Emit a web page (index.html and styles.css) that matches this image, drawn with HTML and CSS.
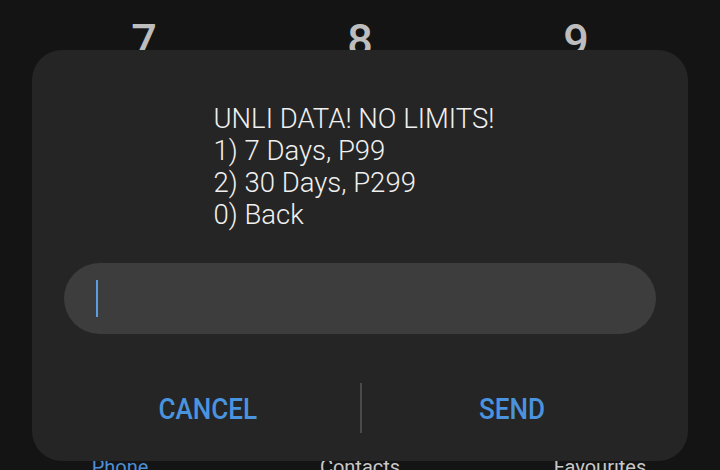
FILE: index.html
```html
<!DOCTYPE html>
<html lang="en">
<head>
  <meta charset="UTF-8">
  <title>USSD</title>
  <link rel="stylesheet" href="styles.css">
</head>
<body>
  <div class="screen">
    <div class="keypad">
      <span class="key">7</span>
      <span class="key">8</span>
      <span class="key">9</span>
    </div>

    <div class="tabs">
      <span class="tab active">Phone</span>
      <span class="tab">Contacts</span>
      <span class="tab">Favourites</span>
    </div>

    <div class="dialog">
      <div class="message">
        <div class="message-text">
          UNLI DATA! NO LIMITS!<br>
          1) 7 Days, P99<br>
          2) 30 Days, P299<br>
          0) Back
        </div>
      </div>

      <div class="reply">
        <span class="caret"></span>
      </div>

      <div class="actions">
        <button class="action cancel"><span>CANCEL</span></button>
        <span class="divider"></span>
        <button class="action send"><span>SEND</span></button>
      </div>
    </div>
  </div>
</body>
</html>
```

FILE: styles.css
```css
body {
  margin: 0;
  background: #141414;
  font-family: Roboto, 'Noto Sans', sans-serif;
}
.screen {
  position: relative;
  width: 720px;
  height: 470px;
  overflow: hidden;
}
.keypad {
  display: grid;
  grid-template-columns: repeat(3, 1fr);
  padding: 19px 36px 0;
}
.key {
  text-align: center;
  font-size: 45px;
  line-height: 44px;
  font-weight: 500;
  color: #bdbdbd;
}
.tabs {
  display: grid;
  grid-template-columns: repeat(3, 1fr);
  margin-top: 392px;
}
.tab {
  text-align: center;
  font-size: 20px;
  line-height: 24px;
  color: #c8c8c8;
}
.tab.active {
  color: #4c8fd6;
}

/* dialog sits over the dialer */
.dialog {
  position: absolute;
  left: 32px;
  top: 50px;
  width: 656px;
  height: 411px;
  background: #252525;
  border-radius: 30px;
  box-sizing: border-box;
  padding: 53px 32px 0;
}
.message {
  display: flex;
  justify-content: center;
}
.message-text {
  font-size: 27.5px;
  line-height: 32px;
  font-weight: 300;
  color: #f0f0f0;
  margin-left: -12px;
}
.reply {
  margin-top: 32px;
  height: 71px;
  border-radius: 36px;
  background: #3d3d3d;
  display: flex;
  align-items: center;
  padding-left: 32px;
}
.caret {
  width: 2px;
  height: 37px;
  background: #5c9ce0;
}
.actions {
  margin-top: 49px;
  height: 50px;
  display: flex;
  align-items: center;
}
.action {
  flex: 1;
  background: none;
  border: none;
  font-family: Roboto, 'Noto Sans', sans-serif;
  font-size: 30px;
  font-weight: 500;
  color: #4a93de;
  padding: 0;
}
.action span {
  display: inline-block;
  transform: scaleX(0.87);
}
.action.cancel {
  padding-right: 8px;
}
.action.send {
  padding-left: 6px;
}
.divider {
  width: 2px;
  height: 50px;
  background: #4a4a4a;
}
```
